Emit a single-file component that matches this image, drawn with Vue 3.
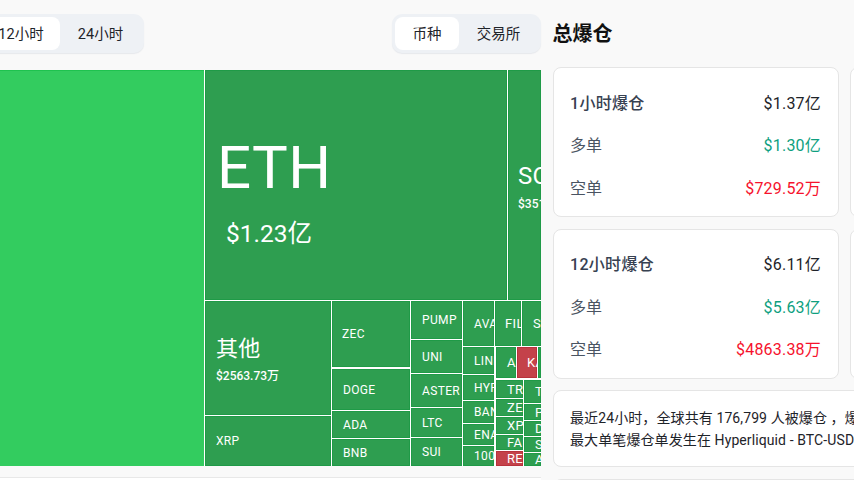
<script setup>
const OFF = 170
const nodes = [
  { n: 'BTC', x: -170, y: 70, r: 204, b: 466, c: 'btc', pl: 20 },
  { n: 'ETH', v: '$1.23亿', x: 205, y: 70, r: 507, b: 300, fs: 60, pl: 12, vs: 24.5, vl: 9, vg: 24, pt: 14 },
  { n: 'SOL', v: '$351', x: 508, y: 70, r: 541, b: 300, fs: 24, pl: 10, vs: 12, vl: 0, vg: 10, pt: 4, vw: 500 },
  { n: '其他', v: '$2563.73万', x: 205, y: 301, r: 331, b: 415, fs: 22, pl: 11, vs: 12, vl: 0, vg: 10, pt: 3, vw: 500 },
  { n: 'XRP', x: 205, y: 416, r: 331, b: 466, pl: 11 },
  { n: 'ZEC', x: 332, y: 301, r: 410, b: 367, pl: 10 },
  { n: 'DOGE', x: 332, y: 369, r: 410, b: 410, pl: 11 },
  { n: 'ADA', x: 332, y: 411, r: 410, b: 438, pl: 11 },
  { n: 'BNB', x: 332, y: 439, r: 410, b: 466, pl: 11 },
  { n: 'PUMP', x: 411, y: 301, r: 462, b: 339, pl: 11 },
  { n: 'UNI', x: 411, y: 340, r: 462, b: 373, pl: 11 },
  { n: 'ASTER', x: 411, y: 374, r: 462, b: 407, pl: 11 },
  { n: 'LTC', x: 411, y: 408, r: 462, b: 437, pl: 11 },
  { n: 'SUI', x: 411, y: 438, r: 462, b: 466, pl: 11 },
  { n: 'AVAX', x: 463, y: 301, r: 494, b: 346, pl: 11 },
  { n: 'LINK', x: 463, y: 347, r: 494, b: 374, pl: 11 },
  { n: 'HYPE', x: 463, y: 375, r: 494, b: 400, pl: 11 },
  { n: 'BANK', x: 463, y: 401, r: 494, b: 423, pl: 11 },
  { n: 'ENA', x: 463, y: 424, r: 494, b: 445, pl: 11 },
  { n: '1000', x: 463, y: 446, r: 494, b: 466, pl: 11 },
  { n: 'FIL', x: 495, y: 301, r: 521, b: 346, pl: 10, fs: 13 },
  { n: 'STX', x: 522, y: 301, r: 541, b: 346, pl: 11, fs: 13 },
  { n: 'AAVE', x: 496, y: 347, r: 516, b: 378, pl: 11, fs: 13 },
  { n: 'KAS', x: 517, y: 347, r: 537, b: 378, pl: 10, c: 'red', fs: 13 },
  { n: '', x: 538, y: 347, r: 541, b: 378, pl: 0 },
  { n: 'TRX', x: 496, y: 380, r: 523, b: 398, pl: 11, fs: 13 },
  { n: 'ZEN', x: 496, y: 399, r: 523, b: 416, pl: 11, fs: 13 },
  { n: 'XPL', x: 496, y: 417, r: 523, b: 434, pl: 11, fs: 13 },
  { n: 'FARTCOIN', x: 496, y: 435, r: 523, b: 450, pl: 11, fs: 13 },
  { n: 'RESOLV', x: 496, y: 451, r: 523, b: 466, pl: 11, c: 'red', fs: 13 },
  { n: 'TAO', x: 524, y: 380, r: 541, b: 403, pl: 11, fs: 13 },
  { n: 'PENGU', x: 524, y: 404, r: 541, b: 420, pl: 11, fs: 13 },
  { n: 'DOT', x: 524, y: 421, r: 541, b: 436, pl: 11, fs: 13 },
  { n: 'SEI', x: 524, y: 437, r: 541, b: 452, pl: 11, fs: 13 },
  { n: 'APT', x: 524, y: 453, r: 541, b: 466, pl: 11, fs: 13 }
]
function nodeStyle(d) {
  return {
    left: d.x + OFF + 'px',
    top: d.y - 70 + 'px',
    width: d.r - d.x + 'px',
    height: d.b - d.y + 'px',
    paddingLeft: d.pl + 'px',
    paddingTop: (d.pt || 0) + 'px',
    fontSize: (d.fs || 12) + 'px'
  }
}
function valueStyle(d) {
  return {
    fontSize: d.vs + 'px',
    marginLeft: d.vl + 'px',
    marginTop: d.vg + 'px',
    fontWeight: d.vw || 400
  }
}
const cards = [
  { t: '1小时爆仓', a: '$1.37亿', l: '$1.30亿', s: '$729.52万' },
  { t: '4小时爆仓', a: '', l: '', s: '' },
  { t: '12小时爆仓', a: '$6.11亿', l: '$5.63亿', s: '$4863.38万' },
  { t: '24小时爆仓', a: '', l: '', s: '' }
]
</script>

<template>
  <div class="page">
    <section class="left">
      <div class="toolbar">
        <div class="seg seg-time">
          <button class="btn hour">1小时</button>
          <button class="btn hour">4小时</button>
          <button class="btn on hour">12小时</button>
          <button class="btn hour">24小时</button>
        </div>
        <div class="seg">
          <button class="btn on coin">币种</button>
          <button class="btn ex">交易所</button>
        </div>
      </div>
      <div class="map">
        <div v-for="d in nodes" :key="d.n + d.x + d.y" class="node" :class="d.c" :style="nodeStyle(d)">
          <span class="name">{{ d.c === 'btc' ? '' : d.n }}</span>
          <span v-if="d.v" class="val" :style="valueStyle(d)">{{ d.v }}</span>
        </div>
      </div>
      <div class="below"></div>
    </section>
    <aside class="right">
      <h2 class="title">总爆仓</h2>
      <div class="grid">
        <div v-for="c in cards" :key="c.t" class="card">
          <div class="row"><span class="lab strong">{{ c.t }}</span><span class="num">{{ c.a }}</span></div>
          <div class="row"><span class="lab">多单</span><span class="num long">{{ c.l }}</span></div>
          <div class="row"><span class="lab">空单</span><span class="num short">{{ c.s }}</span></div>
        </div>
        <div class="card note">
          <p>最近24小时，全球共有 176,799 人被爆仓 ，爆仓</p>
          <p>最大单笔爆仓单发生在 Hyperliquid - BTC-USD</p>
        </div>
        <div class="card note"></div>
      </div>
    </aside>
  </div>
</template>

<style scoped>
.page {
  display: flex;
  width: 854px;
  height: 480px;
  overflow: hidden;
  background: #f9f9f9;
  font-family: Roboto, "Noto Sans CJK SC", sans-serif;
  color: #1e2329;
}
.left {
  flex: none;
  width: 711px;
  margin-left: -170px;
  padding-top: 14px;
}
.toolbar {
  display: flex;
  justify-content: space-between;
  height: 39px;
  margin-bottom: 17px;
}
.seg {
  display: flex;
  padding: 3px;
  border-radius: 10px;
  background: #eef1f5;
  box-shadow: 0 1px 1px #e6e8ec;
}
.btn {
  border: 0;
  padding: 0 0 2px;
  background: transparent;
  border-radius: 8px;
  font: inherit;
  font-size: 14.5px;
  color: #1e2329;
  height: 33px;
}
.btn.on { background: #fff; }
.seg-time .hour { width: 74.5px; }
.seg-time .on { width: 78px; }
.seg-time .hour:last-child { width: 81px; }
.coin { width: 64px; }
.ex { width: 79px; }
.map {
  position: relative;
  height: 396px;
  background: #fff;
}
.node {
  position: absolute;
  box-sizing: border-box;
  overflow: hidden;
  display: flex;
  flex-direction: column;
  justify-content: center;
  align-items: flex-start;
  background: #2e9e50;
  box-shadow: inset 0 0 0 1px #1f9a47;
  color: #fff;
  white-space: nowrap;
  line-height: 1;
  letter-spacing: 0.35px;
}
.val { letter-spacing: 0; }
.btc { background: #33cc5f; box-shadow: inset 0 1px 0 #1fc24f; }
.red { background: #c4424a; box-shadow: inset 0 0 0 1px #b8323c; }
.below {
  height: 3px;
  margin-top: 11px;
  background: #fff;
  border-top: 1px solid #e8e8e8;
}
.right {
  flex: none;
  width: 600px;
  padding-left: 11.5px;
  box-sizing: border-box;
}
.title {
  margin: 0;
  height: 67px;
  padding-top: 20px;
  box-sizing: border-box;
  font-size: 20px;
  line-height: 28px;
  font-weight: 700;
  color: #111;
}
.grid {
  display: grid;
  grid-template-columns: 286px 286px;
  gap: 11.5px;
}
.card {
  box-sizing: border-box;
  height: 150px;
  padding: 12.5px 16.5px 0;
  background: #fff;
  border: 1px solid #e5e5e5;
  border-radius: 8px;
}
.row {
  display: flex;
  justify-content: space-between;
  align-items: center;
  height: 42.5px;
  font-size: 16px;
}
.lab { color: #4a5462; }
.strong { color: #374151; font-weight: 500; letter-spacing: 0.3px; }
.num { color: #1e2329; letter-spacing: 0.2px; }
.long { color: #0f9f7f; }
.short { color: #f6122d; }
.note {
  grid-column: 1 / 3;
  height: 77px;
  padding-top: 17px;
  font-size: 14px;
  line-height: 21.5px;
  letter-spacing: 0.1px;
  color: #1e2329;
}
.note p { margin: 0; white-space: nowrap; }
</style>
